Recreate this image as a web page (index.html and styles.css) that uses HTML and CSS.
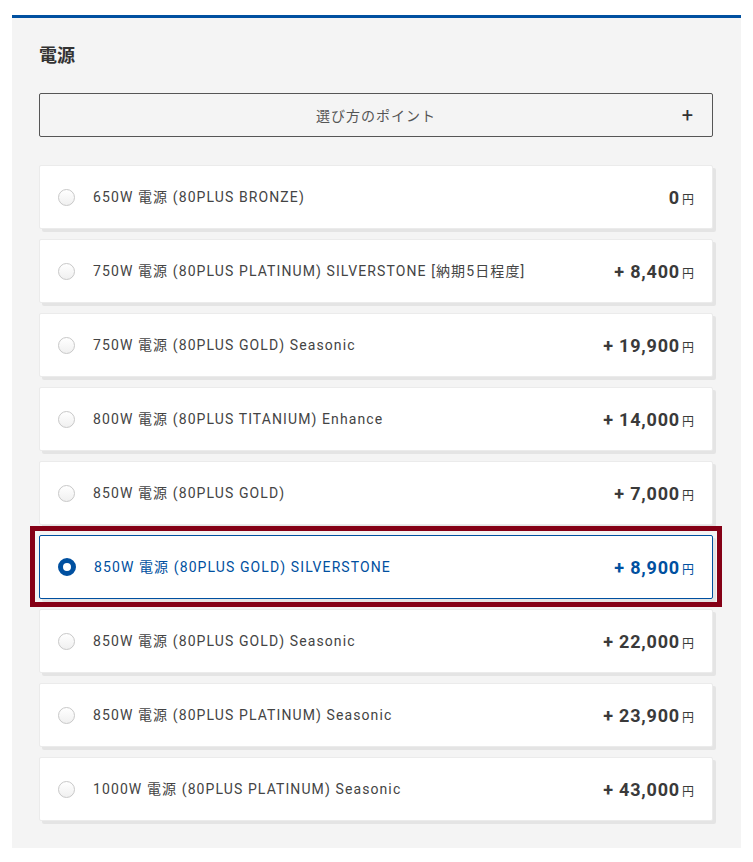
FILE: index.html
```html
<!DOCTYPE html>
<html lang="ja">
<head>
    <meta charset="UTF-8">
    <meta name="viewport" content="width=device-width, initial-scale=1.0">
    <title>電源</title>
    <link rel="stylesheet" href="styles.css">
</head>
<body>

<section class="panel">
    <h2 class="panel-title">電源</h2>

    <button class="point-btn" type="button">
        <span>選び方のポイント</span>
        <span class="point-plus">+</span>
    </button>

    <ul class="options">
        <li class="option">
            <span class="radio"></span>
            <span class="option-name">650W 電源 (80PLUS BRONZE)</span>
            <span class="option-price">0<small>円</small></span>
        </li>
        <li class="option">
            <span class="radio"></span>
            <span class="option-name">750W 電源 (80PLUS PLATINUM) SILVERSTONE [納期5日程度]</span>
            <span class="option-price">+ 8,400<small>円</small></span>
        </li>
        <li class="option">
            <span class="radio"></span>
            <span class="option-name">750W 電源 (80PLUS GOLD) Seasonic</span>
            <span class="option-price">+ 19,900<small>円</small></span>
        </li>
        <li class="option">
            <span class="radio"></span>
            <span class="option-name">800W 電源 (80PLUS TITANIUM) Enhance</span>
            <span class="option-price">+ 14,000<small>円</small></span>
        </li>
        <li class="option">
            <span class="radio"></span>
            <span class="option-name">850W 電源 (80PLUS GOLD)</span>
            <span class="option-price">+ 7,000<small>円</small></span>
        </li>
        <li class="option selected">
            <span class="radio"></span>
            <span class="option-name">850W 電源 (80PLUS GOLD) SILVERSTONE</span>
            <span class="option-price">+ 8,900<small>円</small></span>
            <span class="highlight"></span>
        </li>
        <li class="option">
            <span class="radio"></span>
            <span class="option-name">850W 電源 (80PLUS GOLD) Seasonic</span>
            <span class="option-price">+ 22,000<small>円</small></span>
        </li>
        <li class="option">
            <span class="radio"></span>
            <span class="option-name">850W 電源 (80PLUS PLATINUM) Seasonic</span>
            <span class="option-price">+ 23,900<small>円</small></span>
        </li>
        <li class="option">
            <span class="radio"></span>
            <span class="option-name">1000W 電源 (80PLUS PLATINUM) Seasonic</span>
            <span class="option-price">+ 43,000<small>円</small></span>
        </li>
    </ul>
</section>

</body>
</html>
```

FILE: styles.css
```css
body {
    margin: 0;
    background-color: #ffffff;
    font-family: Roboto, "Noto Sans CJK JP", sans-serif;
    color: #333333;
}
.panel {
    margin: 15px 12px 0;
    width: 729px;
    box-sizing: border-box;
    background-color: #f4f4f4;
    border-top: 3px solid #0050a0;
    padding: 25px 28px 27px 27px;
}
.panel-title {
    margin: 0 0 24px;
    font-size: 18px;
    line-height: 26px;
    font-weight: bold;
    color: #333333;
}
.point-btn {
    position: relative;
    display: flex;
    align-items: center;
    justify-content: center;
    width: 100%;
    height: 44px;
    margin: 0 0 28px;
    padding: 0;
    border: 1px solid #555555;
    border-radius: 2px;
    background: transparent;
    font-family: inherit;
    font-size: 14px;
    letter-spacing: 1px;
    color: #555555;
}
.point-plus {
    position: absolute;
    right: 18px;
    top: 10px;
    font-size: 20px;
    line-height: 22px;
    color: #333333;
}
.options {
    list-style: none;
    margin: 0;
    padding: 0;
    display: flex;
    flex-direction: column;
    gap: 10px;
}
.option {
    position: relative;
    display: flex;
    align-items: center;
    height: 64px;
    box-sizing: border-box;
    padding: 0 18px 0 18px;
    background-color: #ffffff;
    border: 1px solid #ebebeb;
    border-radius: 2px;
    box-shadow: 3px 3px 0 #e4e4e4;
}
.radio {
    width: 17px;
    height: 17px;
    box-sizing: border-box;
    border: 1px solid #c8c8c8;
    border-radius: 50%;
    background: linear-gradient(#ffffff, #f0f0f0);
    margin-right: 18px;
    flex-shrink: 0;
}
.option-name {
    flex: 1;
    font-size: 14px;
    letter-spacing: 1.1px;
    color: #444444;
    margin-top: -2px;
}
.option-price {
    font-size: 18px;
    font-weight: bold;
    letter-spacing: 0.8px;
    color: #3a3a3a;
}
.option-price small {
    font-size: 12px;
    font-weight: normal;
    letter-spacing: 0;
    margin-left: 2px;
}
.option.selected {
    border-color: #0050a0;
}
.option.selected .radio {
    border: 5px solid #0050a0;
    background: #ffffff;
    width: 18px;
    height: 18px;
}
.option.selected .option-name,
.option.selected .option-price {
    color: #0050a0;
}
.highlight {
    position: absolute;
    top: -10px;
    left: -10px;
    right: -10px;
    bottom: -9px;
    border: 5px solid #850016;
    pointer-events: none;
}
```
